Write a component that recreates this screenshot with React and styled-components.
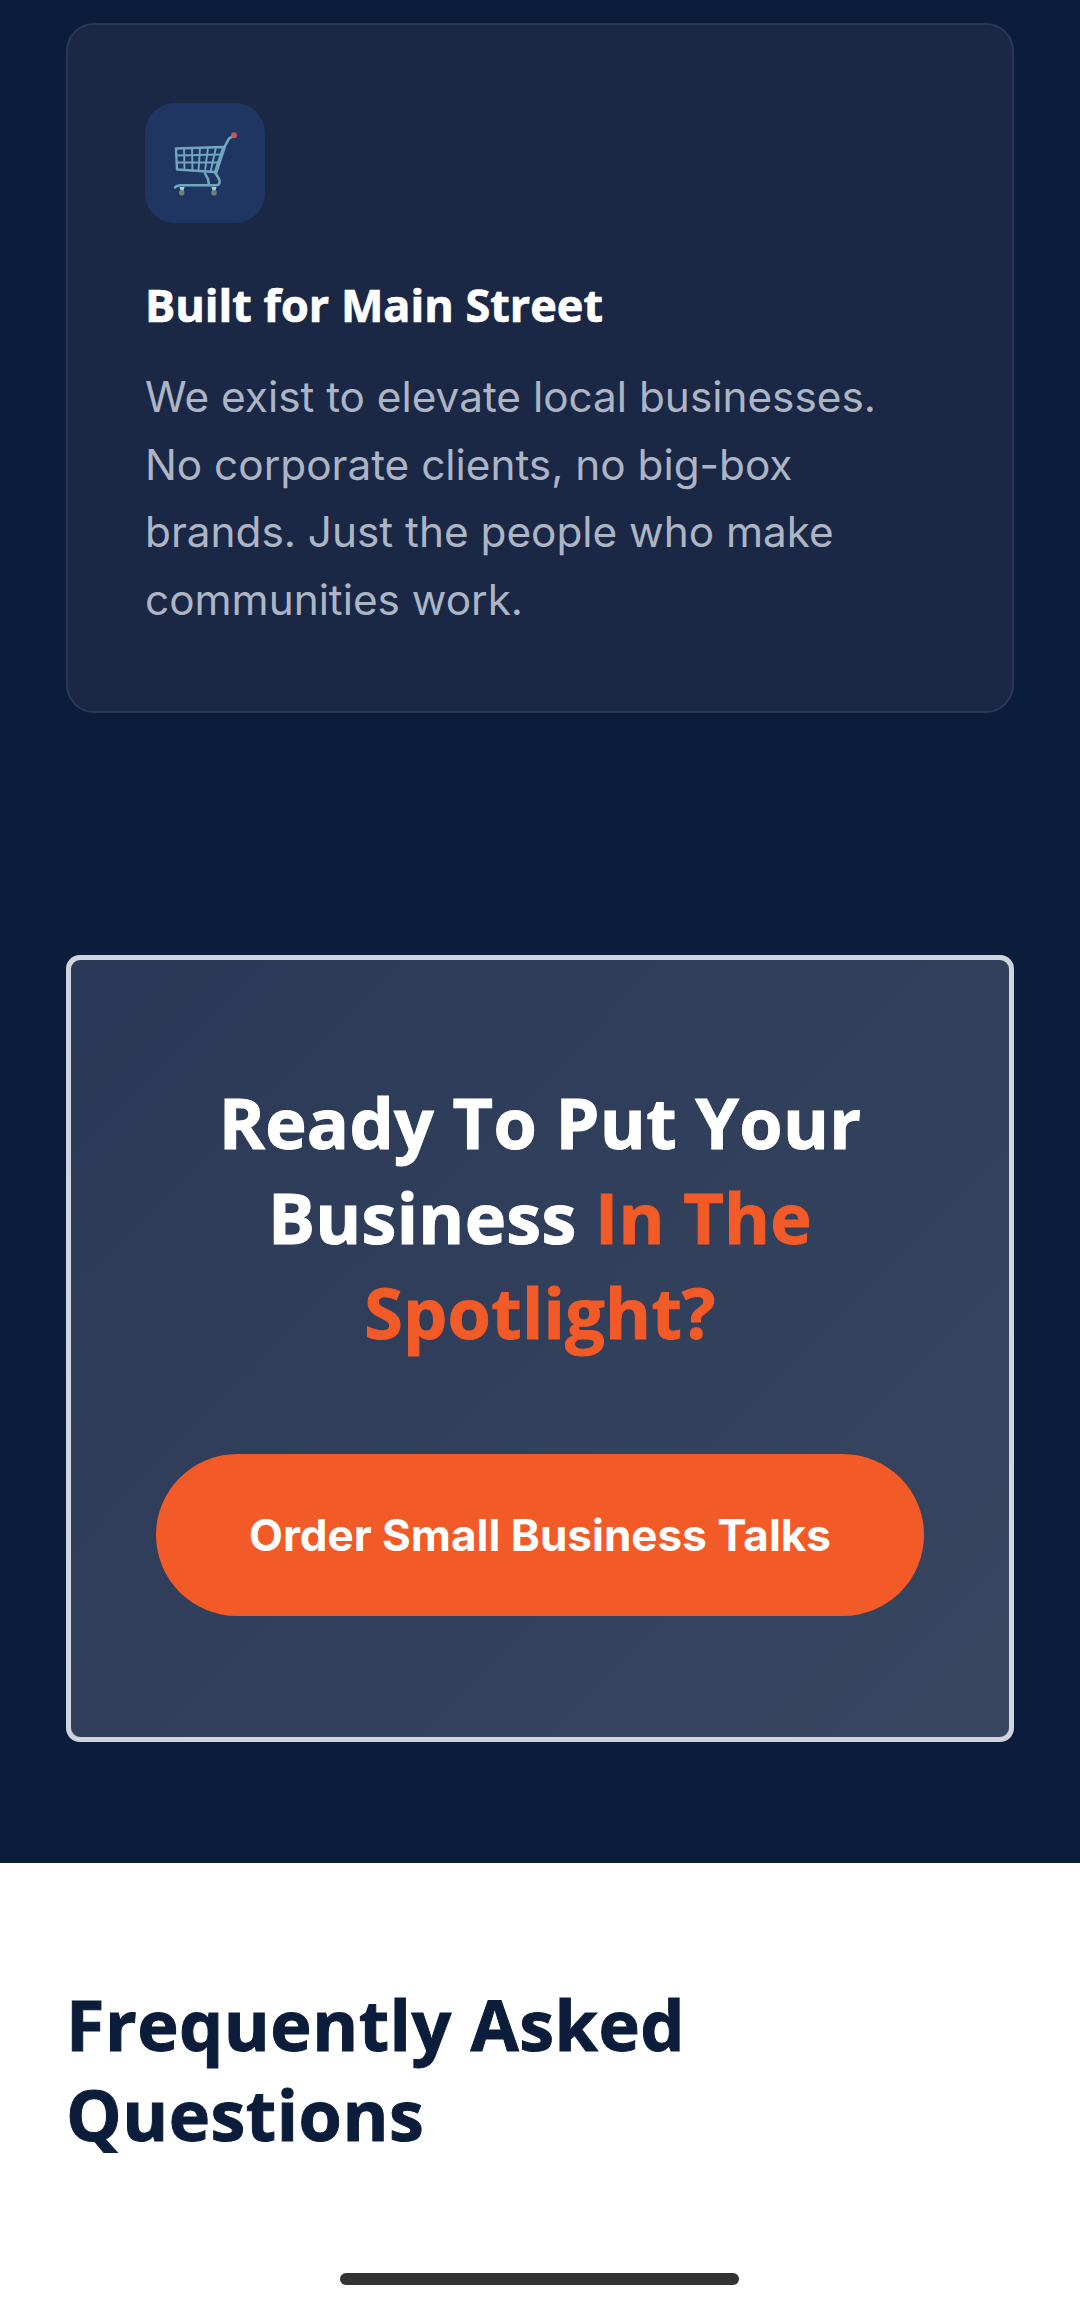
import React from "react";
import styled, { createGlobalStyle } from "styled-components";

const GlobalStyle = createGlobalStyle`
  html, body {
    margin: 0;
    padding: 0;
    background: #fff;
  }
  body {
    font-family: "Inter", "Liberation Sans", sans-serif;
  }
`;

const HEADING_FONT = `"Open Sans", "Noto Sans", sans-serif`;

const Page = styled.div`
  position: relative;
  width: 1080px;
  height: 2300px;
  overflow: hidden;
  background: #fff;
`;

const DarkSection = styled.section`
  background: #0b1d3a;
  padding: 23px 66px 121px;
  display: flex;
  flex-direction: column;
  gap: 242px;
`;

const FeatureCard = styled.article`
  box-sizing: border-box;
  height: 690px;
  padding: 78px 77px;
  background: #1a2845;
  border: 2px solid #2b3853;
  border-radius: 28px;
`;

const IconTile = styled.div`
  width: 120px;
  height: 120px;
  border-radius: 30px;
  background: #1f3663;
`;

const FeatureTitle = styled.h3`
  margin: 52px 0 0;
  font-family: ${HEADING_FONT};
  font-weight: 700;
  font-size: 45px;
  line-height: 60px;
  -webkit-text-stroke: 0.7px #fff;
  color: #fff;
`;

const FeatureText = styled.p`
  margin: 28px 0 0;
  font-size: 42.3px;
  line-height: 67.5px;
  white-space: nowrap;
  color: #adb5c5;
`;

const CtaCard = styled.div`
  box-sizing: border-box;
  height: 787px;
  padding: 115px 84px 0;
  background: linear-gradient(135deg, #2a3957, #384660);
  border: 5px solid #d0d4de;
  border-radius: 14px;
  display: flex;
  flex-direction: column;
  align-items: center;
`;

const CtaTitle = styled.h2`
  margin: 0;
  font-family: ${HEADING_FONT};
  font-weight: 700;
  font-size: 70px;
  line-height: 95px;
  letter-spacing: 0.3px;
  text-align: center;
  white-space: nowrap;
  -webkit-text-stroke: 1px currentColor;
  color: #fff;
`;

const Accent = styled.span`
  color: #f25a27;
`;

const CtaButton = styled.a`
  margin-top: 94px;
  width: 768px;
  height: 162px;
  flex: none;
  border-radius: 81px;
  background: #f25a27;
  color: #fff;
  font-weight: 700;
  font-size: 44px;
  display: flex;
  align-items: center;
  justify-content: center;
`;

const FaqSection = styled.section`
  padding: 116px 66px 0;
`;

const FaqTitle = styled.h2`
  margin: 0;
  font-family: ${HEADING_FONT};
  font-weight: 700;
  font-size: 70px;
  line-height: 90px;
  letter-spacing: 0.5px;
  -webkit-text-stroke: 1px #0b1d3a;
  color: #0b1d3a;
`;

const HomeBar = styled.div`
  position: absolute;
  left: 340px;
  bottom: 15px;
  width: 399px;
  height: 12px;
  border-radius: 6px;
  background: #333;
`;

function CartIcon() {
  return (
    <svg width="120" height="120" viewBox="0 0 120 120" fill="none">
      <g stroke="#72a6bf" strokeWidth="2.4" strokeLinecap="round" strokeLinejoin="round">
        <path d="M31 45.5 78.5 44 70 69 32 66.5Z" />
        <path d="M31.2 52.5 76 51.5M31.5 59.5 73.5 59.5" strokeWidth="1.9" />
        <path d="M39 45.5 39.5 67M47 45 47.5 67.5M55 45 53.5 68M63 44.6 60 68.5M71 44.3 65.5 69" strokeWidth="1.9" />
        <path d="M71 70 80 43 84 35.5 89 32.5" strokeWidth="2.6" />
        <path d="M30 84.5C31.5 82.5 33 82.3 36 82.3H71C75 82.3 75.5 78 73.5 75L70 69.5" strokeWidth="2.6" />
        <path d="M60 70.5 63 76 64 82" strokeWidth="2.6" />
      </g>
      <circle cx="89" cy="32.3" r="3" fill="#d0525f" />
      <path d="M34.5 84h5l-1.5 5h-2Z" fill="#9bdcd2" />
      <path d="M66.5 84h5l-1.5 5h-2Z" fill="#9bdcd2" />
      <circle cx="36.7" cy="89.7" r="2.8" fill="#6f7f78" />
      <circle cx="69" cy="89.7" r="2.8" fill="#6f7f78" />
    </svg>
  );
}

export default function App() {
  return (
    <Page>
      <GlobalStyle />
      <DarkSection>
        <FeatureCard>
          <IconTile>
            <CartIcon />
          </IconTile>
          <FeatureTitle>Built for Main Street</FeatureTitle>
          <FeatureText>
            We exist to elevate local businesses.
            <br />
            No corporate clients, no big-box
            <br />
            brands. Just the people who make
            <br />
            communities work.
          </FeatureText>
        </FeatureCard>
        <CtaCard>
          <CtaTitle>
            Ready To Put Your
            <br />
            Business <Accent>In The</Accent>
            <br />
            <Accent>Spotlight?</Accent>
          </CtaTitle>
          <CtaButton>Order Small Business Talks</CtaButton>
        </CtaCard>
      </DarkSection>
      <FaqSection>
        <FaqTitle>
          Frequently Asked
          <br />
          Questions
        </FaqTitle>
      </FaqSection>
      <HomeBar />
    </Page>
  );
}
